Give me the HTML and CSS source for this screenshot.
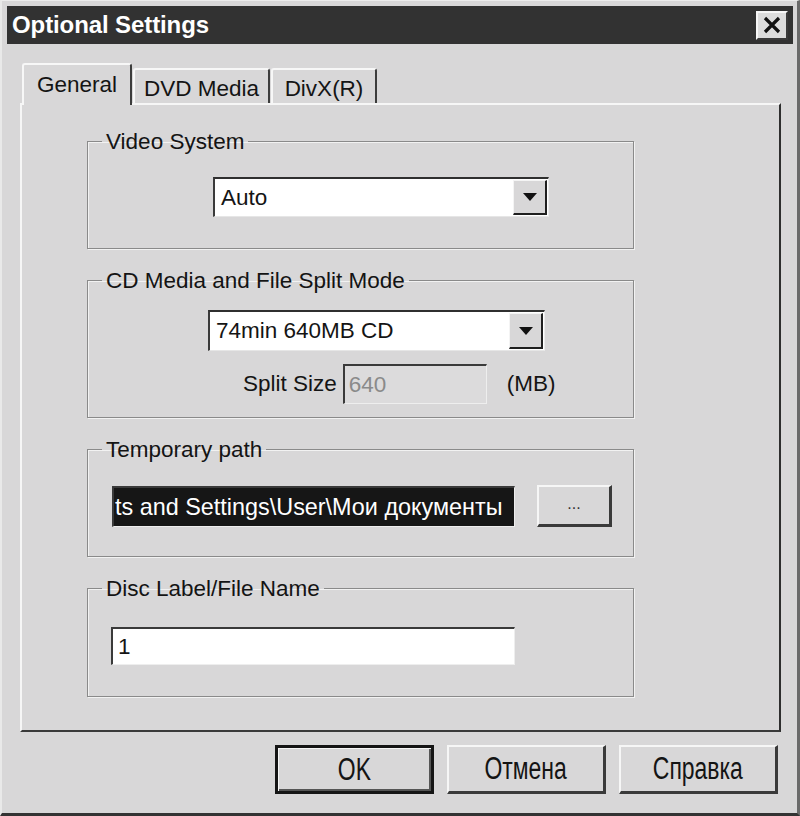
FILE: index.html
```
<!DOCTYPE html>
<html lang="en">
<head>
<meta charset="utf-8">
<title>Optional Settings</title>
<link rel="stylesheet" href="styles.css">
</head>
<body>
<div class="window">
  <div class="titlebar">
    <span class="title">Optional Settings</span>
    <span class="close" aria-label="Close">
      <svg width="20" height="18" viewBox="0 0 20 18"><path d="M3 2 L17 16 M17 2 L3 16" stroke="#111" stroke-width="3.2" fill="none"/></svg>
    </span>
  </div>

  <div class="tabs">
    <div class="tab tab-general active">General</div>
    <div class="tab tab-dvd">DVD Media</div>
    <div class="tab tab-divx">DivX(R)</div>
  </div>

  <div class="panel">
    <fieldset class="group">
      <legend>Video System</legend>
      <div class="body body-video">
        <div class="combo combo-video">
          <span class="combo-text">Auto</span>
          <span class="combo-btn"><i class="arrow"></i></span>
        </div>
      </div>
    </fieldset>

    <fieldset class="group">
      <legend>CD Media and File Split Mode</legend>
      <div class="body body-cd">
        <div class="combo combo-cd">
          <span class="combo-text">74min 640MB CD</span>
          <span class="combo-btn"><i class="arrow"></i></span>
        </div>
        <div class="split-row">
          <span class="split-label">Split Size</span>
          <span class="field field-disabled">640</span>
          <span class="unit">(MB)</span>
        </div>
      </div>
    </fieldset>

    <fieldset class="group">
      <legend>Temporary path</legend>
      <div class="body body-path">
        <span class="field field-path"><span class="path-text">ts and Settings\User\Мои документы</span></span>
        <span class="btn btn-browse">...</span>
      </div>
    </fieldset>

    <fieldset class="group group-last">
      <legend>Disc Label/File Name</legend>
      <div class="body body-label">
        <span class="field field-label">1</span>
      </div>
    </fieldset>
  </div>

  <div class="buttons">
    <span class="btn btn-main btn-default"><span class="cap">OK</span></span>
    <span class="btn btn-main"><span class="cap">Отмена</span></span>
    <span class="btn btn-main"><span class="cap">Справка</span></span>
  </div>
</div>
</body>
</html>
```
FILE: styles.css
```
* { box-sizing: border-box; }

html, body {
  margin: 0;
  padding: 0;
  background: #d8d7d8;
}

body {
  font-family: "Liberation Sans", Arial, sans-serif;
  color: #141414;
}

.window {
  width: 800px;
  height: 816px;
  background: #d8d7d8;
  border-top: 1px solid #ececec;
  border-left: 2px solid #e9e9e9;
  border-right: 3px solid #6a6a6a;
  border-bottom: 3px solid #333;
  padding: 5px 4px 0 5px;
  display: flex;
  flex-direction: column;
}

/* Title bar */
.titlebar {
  height: 38px;
  background: #323232;
  display: flex;
  align-items: center;
  justify-content: space-between;
  padding: 0 5px 0 5px;
}

.title {
  color: #fff;
  font-weight: bold;
  font-size: 24px;
  letter-spacing: -0.1px;
}

.close {
  width: 32px;
  height: 29px;
  background: #dcdcdc;
  border-top: 2px solid #f6f6f6;
  border-left: 2px solid #f6f6f6;
  border-right: 2px solid #3a3a3a;
  border-bottom: 2px solid #3a3a3a;
  display: flex;
  align-items: center;
  justify-content: center;
}

/* Tabs */
.tabs {
  margin-top: 19px;
  margin-left: 15px;
  height: 42px;
  display: flex;
  align-items: flex-end;
  gap: 1px;
}

.tab {
  font-size: 22.5px;
  background: #d8d7d8;
  border-top: 2px solid #f7f7f7;
  border-left: 2px solid #f7f7f7;
  border-right: 2px solid #3c3c3c;
  border-top-left-radius: 3px;
  border-top-right-radius: 3px;
  display: flex;
  justify-content: center;
  height: 35px;
  margin-bottom: 2px;
  padding-top: 6px;
}

.tab.active {
  position: relative;
  z-index: 1;
  height: 42px;
  margin-bottom: 0;
  padding-top: 7px;
}

.tab-general { width: 110px; }
.tab-dvd { width: 137px; }
.tab-divx { width: 106px; }

/* Panel */
.panel {
  margin-top: -2px;
  margin-left: 13px;
  width: 761px;
  border-top: 2px solid #f6f6f6;
  border-left: 2px solid #f6f6f6;
  border-right: 2px solid #2e2e2e;
  border-bottom: 2px solid #3a3a3a;
  padding: 24px 0 33px 65px;
  display: flex;
  flex-direction: column;
  gap: 19px;
}

.group {
  margin: 0;
  padding: 0;
  width: 547px;
  border: 1px solid #8a8a8a;
  box-shadow: 1px 1px 0 #f2f2f2, inset 1px 1px 0 #f2f2f2;
  min-inline-size: 0;
}

.group legend {
  margin-left: 14px;
  padding: 2px 4px 0;
  font-size: 22.5px;
  line-height: 22px;
}

.body { width: 100%; }

.body-video { height: 95px; padding: 24px 0 0 125px; }
.body-cd { height: 125px; padding: 18px 0 0 120px; }
.body-path { height: 95px; padding: 25px 0 0 24px; display: flex; align-items: flex-start; gap: 22px; }
.body-label { height: 96px; padding: 27px 0 0 23px; }

/* Combo box */
.combo {
  display: flex;
  align-items: stretch;
  background: #fff;
  border-top: 2px solid #2f2f2f;
  border-left: 2px solid #3a3a3a;
  border-right: 1px solid #ececec;
  border-bottom: 1px solid #e6e6e6;
  padding: 1px 1px 1px 0;
}

.combo-video { width: 336px; height: 40px; }
.combo-cd { width: 337px; height: 41px; }

.combo-text {
  flex: 1;
  font-size: 22.5px;
  padding-left: 6px;
  display: flex;
  align-items: center;
}

.combo-btn {
  width: 34px;
  background: #d8d7d8;
  border-top: 1px solid #f4f4f4;
  border-left: 1px solid #f4f4f4;
  border-right: 2px solid #1f1f1f;
  border-bottom: 2px solid #1f1f1f;
  display: flex;
  align-items: center;
  justify-content: center;
}

.arrow {
  display: block;
  width: 0;
  height: 0;
  border-left: 7px solid transparent;
  border-right: 7px solid transparent;
  border-top: 8px solid #111;
}

/* Split row */
.split-row {
  margin-top: 13px;
  margin-left: 35px;
  display: flex;
  align-items: center;
  height: 40px;
}

.split-label {
  font-size: 22.5px;
  margin-right: 6px;
}

.unit {
  font-size: 22.5px;
  margin-left: 20px;
}

/* Fields */
.field {
  display: flex;
  align-items: center;
  font-size: 22.5px;
  border-top: 2px solid #3a3a3a;
  border-left: 2px solid #3a3a3a;
  border-right: 1px solid #eeeeee;
  border-bottom: 1px solid #eeeeee;
}

.field-disabled {
  width: 144px;
  height: 40px;
  background: #dcdbdc;
  color: #8a8a8a;
  padding-left: 4px;
}

.field-path {
  width: 403px;
  height: 41px;
  background: #161616;
  color: #fff;
  padding: 0 0 0 1px;
  white-space: nowrap;
  font-size: 23.4px;
}

.path-text { flex: none; }

.field-label {
  width: 404px;
  height: 38px;
  background: #fff;
  padding-left: 5px;
}

/* Buttons */
.btn {
  display: flex;
  align-items: center;
  justify-content: center;
  background: #d8d7d8;
  border-top: 2px solid #f6f6f6;
  border-left: 2px solid #f6f6f6;
  border-right: 3px solid #3a3a3a;
  border-bottom: 3px solid #3a3a3a;
}

.btn-browse {
  width: 75px;
  height: 42px;
  margin-top: -1px;
  font-size: 16px;
  color: #333;
  padding-bottom: 4px;
}

.buttons {
  margin-top: 13px;
  margin-right: 15px;
  display: flex;
  justify-content: flex-end;
  gap: 13px;
}

.btn-main {
  width: 159px;
  height: 49px;
}

.btn-default {
  border: 3px solid #151515;
  box-shadow: inset 1px 1px 0 #f6f6f6, inset -2px -2px 0 #555;
}

.cap {
  display: inline-block;
  font-size: 31px;
  transform: scaleX(0.74);
  color: #141414;
}
```
